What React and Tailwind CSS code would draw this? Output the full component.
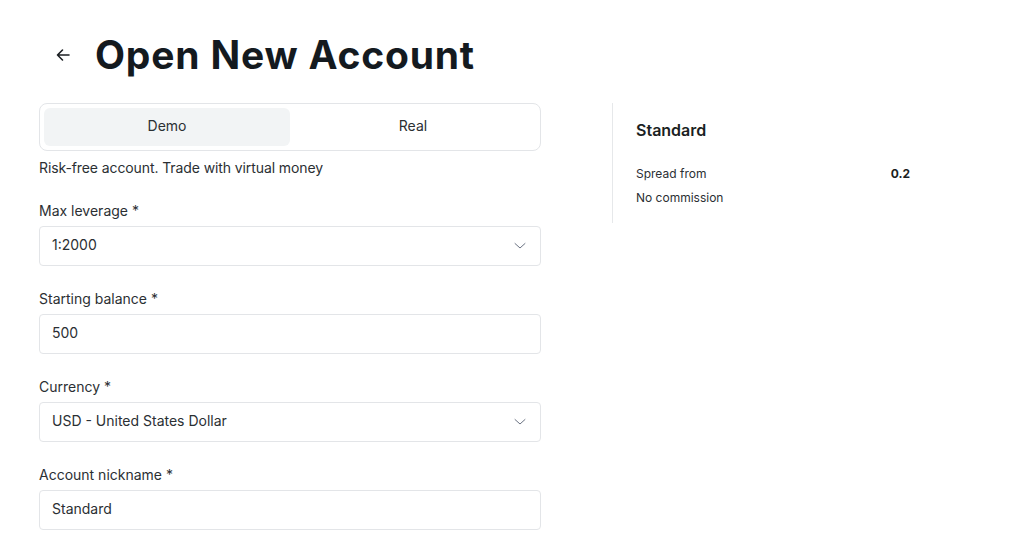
import React, {useState} from 'react';

const ChevronDown = () => (
    <svg width="12" height="12" viewBox="0 0 12 12" fill="none" className="text-gray-500">
        <path d="M1 3.5 L6 8 L11 3.5" stroke="currentColor" strokeWidth="1" strokeLinecap="round" strokeLinejoin="round"/>
    </svg>
);

const Field = ({label, value, select}) => (
    <div>
        <label className="block text-[14px] leading-5 text-[#2b2f33] mb-[5px]">{label}</label>
        <div className="h-10 flex items-center justify-between pl-3 pr-[14px] pb-[3px] border border-[#e3e5e8] rounded-[4px] bg-white text-[14px] text-[#2b2f33]">
            <span>{value}</span>
            {select && <span className="pt-[3px]"><ChevronDown/></span>}
        </div>
    </div>
);

const App = () => {
    const [tab, setTab] = useState('demo');

    return (
        <div className="min-h-screen bg-white px-[39px] pt-[30px]" style={{fontFamily: 'Inter, "Noto Sans", sans-serif'}}>
            <div className="h-[50px] flex items-center">
                <button className="ml-4 mr-6 text-[#1b1f23]">
                    <svg width="16" height="16" viewBox="0 0 16 16" fill="none">
                        <path d="M14 8 H2.5 M7.5 3 L2.5 8 L7.5 13" stroke="currentColor" strokeWidth="1.6" strokeLinecap="round" strokeLinejoin="round"/>
                    </svg>
                </button>
                <h1 className="text-[39px] font-bold tracking-[0.8px] text-[#141a1f]" style={{fontFamily: 'Inter, sans-serif', fontWeight: 700}}>
                    Open New Account
                </h1>
            </div>

            <div className="flex mt-[23px]">
                <div className="w-[502px]">
                    <div className="h-12 p-1 flex border border-[#e3e5e8] rounded-lg">
                        <button
                            onClick={() => setTab('demo')}
                            className={`flex-1 rounded-md pb-[3px] text-[14px] text-[#2b2f33] ${tab === 'demo' ? 'bg-[#f2f4f5]' : ''}`}
                        >
                            Demo
                        </button>
                        <button
                            onClick={() => setTab('real')}
                            className={`flex-1 rounded-md pb-[3px] text-[14px] text-[#2b2f33] ${tab === 'real' ? 'bg-[#f2f4f5]' : ''}`}
                        >
                            Real
                        </button>
                    </div>
                    <p className="mt-[7px] text-[14px] leading-5 tracking-[-0.1px] text-[#2b2f33]">Risk-free account. Trade with virtual money</p>

                    <div className="mt-[23px] flex flex-col gap-[23px]">
                        <Field label="Max leverage *" value="1:2000" select/>
                        <Field label="Starting balance *" value="500"/>
                        <Field label="Currency *" value="USD - United States Dollar" select/>
                        <Field label="Account nickname *" value="Standard"/>
                    </div>
                </div>

                <div className="ml-[71px] self-start border-l border-[#e6e8ea] pl-[23px] pt-[17px] pb-[17px] w-[298px]">
                    <h2 className="text-[16px] leading-5 font-semibold text-[#1b1f23]">Standard</h2>
                    <div className="mt-[26px] flex justify-between text-[12px] leading-4 text-[#2b2f33]">
                        <span>Spread from</span>
                        <span className="font-bold text-[#1b1f23]">0.2</span>
                    </div>
                    <div className="mt-2 text-[12px] leading-4 text-[#2b2f33]">No commission</div>
                </div>
            </div>
        </div>
    );
};

export default App;
